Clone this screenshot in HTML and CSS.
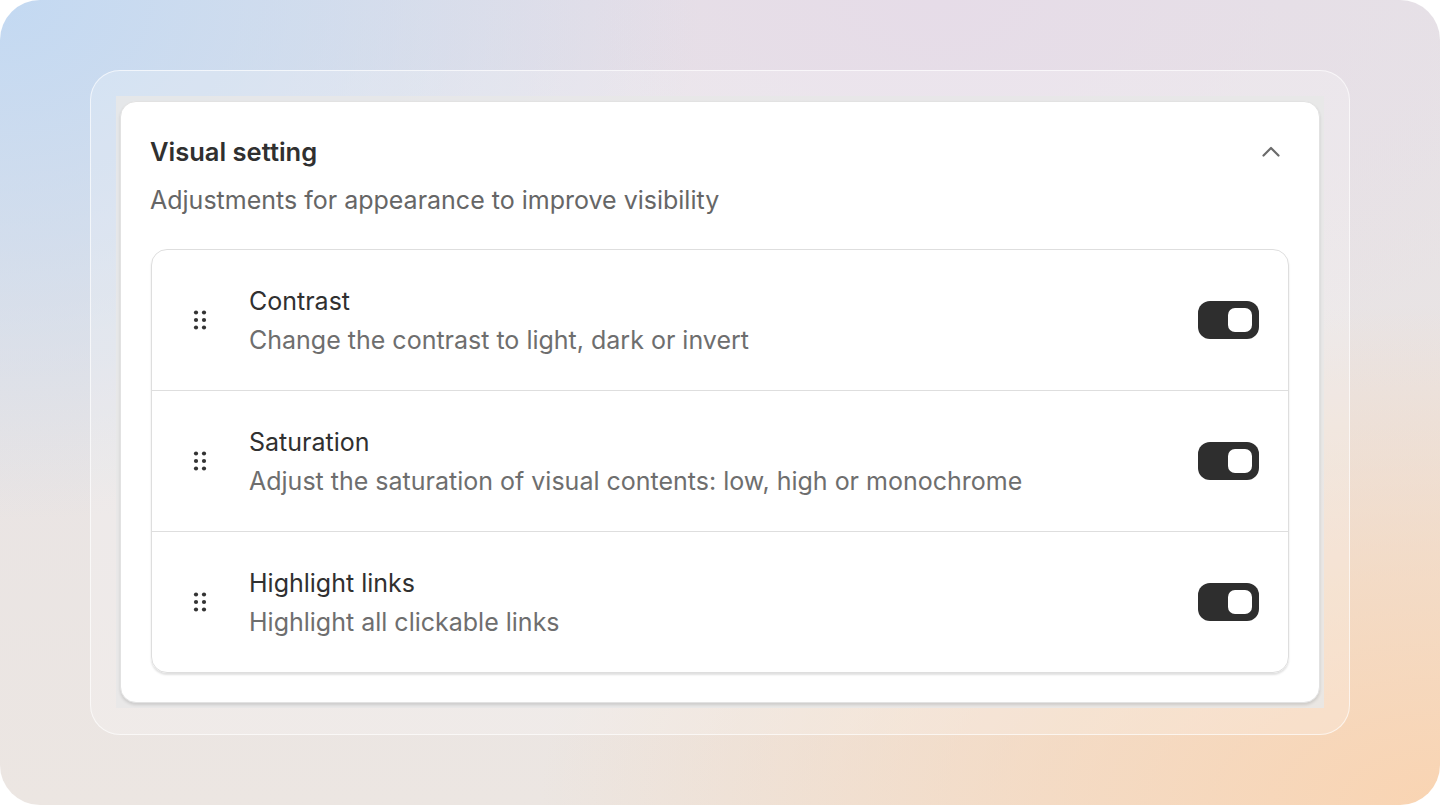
FILE: index.html
```html
<!DOCTYPE html>
<html lang="en">
<head>
    <meta charset="UTF-8">
    <meta name="viewport" content="width=device-width, initial-scale=1.0">
    <title>Visual setting</title>
    <link rel="stylesheet" href="styles.css">
</head>
<body>
    <div class="page">
        <div class="frame">
            <div class="tray">
                <section class="card">
                    <div class="card-head">
                        <h1>Visual setting</h1>
                        <!-- collapse chevron -->
                        <svg class="chevron" width="22" height="22" viewBox="0 0 22 22">
                            <path d="M3.5 14.5 L11 7 L18.5 14.5" fill="none" stroke="#6b6b6b" stroke-width="2.2" stroke-linecap="round" stroke-linejoin="round"/>
                        </svg>
                    </div>
                    <p class="card-sub">Adjustments for appearance to improve visibility</p>

                    <div class="options">
                        <div class="option">
                            <svg class="handle" width="14" height="22" viewBox="0 0 14 22">
                                <circle cx="3" cy="3.5" r="2.1"/><circle cx="11" cy="3.5" r="2.1"/>
                                <circle cx="3" cy="11" r="2.1"/><circle cx="11" cy="11" r="2.1"/>
                                <circle cx="3" cy="18.5" r="2.1"/><circle cx="11" cy="18.5" r="2.1"/>
                            </svg>
                            <div class="option-text">
                                <div class="option-title">Contrast</div>
                                <div class="option-desc">Change the contrast to light, dark or invert</div>
                            </div>
                            <div class="toggle"><span class="knob"></span></div>
                        </div>
                        <div class="option">
                            <svg class="handle" width="14" height="22" viewBox="0 0 14 22">
                                <circle cx="3" cy="3.5" r="2.1"/><circle cx="11" cy="3.5" r="2.1"/>
                                <circle cx="3" cy="11" r="2.1"/><circle cx="11" cy="11" r="2.1"/>
                                <circle cx="3" cy="18.5" r="2.1"/><circle cx="11" cy="18.5" r="2.1"/>
                            </svg>
                            <div class="option-text">
                                <div class="option-title">Saturation</div>
                                <div class="option-desc">Adjust the saturation of visual contents: low, high or monochrome</div>
                            </div>
                            <div class="toggle"><span class="knob"></span></div>
                        </div>
                        <div class="option">
                            <svg class="handle" width="14" height="22" viewBox="0 0 14 22">
                                <circle cx="3" cy="3.5" r="2.1"/><circle cx="11" cy="3.5" r="2.1"/>
                                <circle cx="3" cy="11" r="2.1"/><circle cx="11" cy="11" r="2.1"/>
                                <circle cx="3" cy="18.5" r="2.1"/><circle cx="11" cy="18.5" r="2.1"/>
                            </svg>
                            <div class="option-text">
                                <div class="option-title">Highlight links</div>
                                <div class="option-desc">Highlight all clickable links</div>
                            </div>
                            <div class="toggle"><span class="knob"></span></div>
                        </div>
                    </div>
                </section>
            </div>
        </div>
    </div>
</body>
</html>
```

FILE: styles.css
```css
/* Page background */
body {
    margin: 0;
    background-color: #ffffff;
    font-family: Inter, "Noto Sans", Arial, sans-serif;
}

.page {
    width: 1440px;
    height: 805px;
    box-sizing: border-box;
    padding: 70px 90px;
    border-radius: 40px;
    overflow: hidden;
    background-color: #e9e3e2;
    background-image:
        radial-gradient(ellipse 700px 520px at 0% 0%, #c3d9f2 0%, rgba(195, 217, 242, 0.6) 45%, rgba(195, 217, 242, 0) 100%),
        radial-gradient(ellipse 900px 500px at 100% 100%, #f9d4b2 0%, rgba(249, 212, 178, 0.6) 45%, rgba(249, 212, 178, 0) 100%),
        radial-gradient(ellipse 700px 400px at 65% 0%, #e6dce8 0%, rgba(230, 220, 232, 0) 100%),
        linear-gradient(180deg, #e6e2e6 0%, #ece6e2 100%);
}

/* Glass frame */
.frame {
    height: 100%;
    box-sizing: border-box;
    padding: 25px 25px 26px;
    border: 1.5px solid rgba(255, 255, 255, 0.65);
    border-radius: 30px;
    background-color: rgba(255, 255, 255, 0.22);
}

.tray {
    height: 100%;
    box-sizing: border-box;
    padding: 5px 4px;
    background-color: rgba(232, 232, 232, 0.85);
}

/* Settings card */
.card {
    height: 100%;
    box-sizing: border-box;
    padding: 35px 29px 32px;
    background-color: #fff;
    border: 1px solid #e2e2e2;
    border-radius: 16px;
    box-shadow: 0 2px 3px rgba(0, 0, 0, 0.12);
}

.card-head {
    display: flex;
    justify-content: space-between;
    align-items: center;
}

h1 {
    margin: 0;
    font-size: 25.5px;
    line-height: 30px;
    font-weight: 600;
    color: #303030;
}

.chevron {
    margin-right: 8px;
}

.card-sub {
    margin: 18px 0 0;
    font-size: 25px;
    line-height: 30px;
    color: #666;
}

/* Option list */
.options {
    margin: 34px 1px 0;
    border: 1px solid #dedede;
    border-radius: 16px;
    box-shadow: 0 2px 2px rgba(0, 0, 0, 0.12);
}

.option {
    display: flex;
    align-items: center;
    height: 140px;
    padding: 0 29px 0 41px;
    border-bottom: 1px solid #dedede;
}

.option:last-child {
    border-bottom: none;
}

.handle {
    fill: #333;
    flex-shrink: 0;
}

.option-text {
    flex: 1;
    margin-left: 42px;
}

.option-title {
    font-size: 25px;
    line-height: 30px;
    color: #303030;
}

.option-desc {
    margin-top: 9px;
    font-size: 25px;
    line-height: 30px;
    color: #6e6e6e;
}

/* Toggle switch (on) */
.toggle {
    display: flex;
    justify-content: flex-end;
    align-items: center;
    width: 61px;
    height: 38px;
    box-sizing: border-box;
    padding: 0 7px;
    background-color: #2e2e2e;
    border-radius: 12px;
}

.knob {
    width: 24px;
    height: 24px;
    background-color: #fff;
    border-radius: 7px;
}
```
